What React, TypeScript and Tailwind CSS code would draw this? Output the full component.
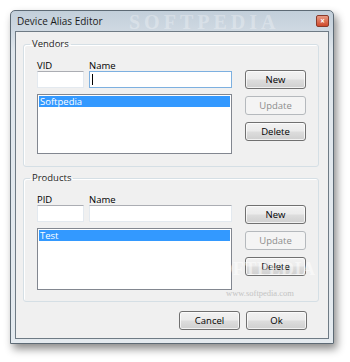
import { ReactNode } from "react";

const font = { fontFamily: '"Open Sans", "Noto Sans", sans-serif' };

function Btn({ children, disabled }: { children: ReactNode; disabled?: boolean }) {
  return (
    <button
      className={
        disabled
          ? "w-[61px] h-[19px] rounded-[3px] border border-[#b5b9bd] bg-[#f4f4f4] text-[9.5px] leading-none text-[#8d8d8d]"
          : "w-[61px] h-[19px] rounded-[3px] border border-[#707070] bg-[linear-gradient(to_bottom,#f2f2f2_0%,#ebebeb_48%,#dddddd_52%,#cfcfcf_100%)] shadow-[inset_0_0_0_1px_rgba(255,255,255,0.7)] text-[9.5px] leading-none text-black"
      }
    >
      {children}
    </button>
  );
}

function Group({
  title,
  idLabel,
  item,
  focused,
  listH,
  top,
  btnTop,
  pb,
}: {
  title: string;
  idLabel: string;
  item: string;
  focused?: boolean;
  listH: string;
  top: string;
  btnTop: string;
  pb: string;
}) {
  return (
    <fieldset
      className={`w-[296px] ml-[7px] border border-[#d5dfe5] rounded-[3px] shadow-[inset_1px_1px_0_#ffffff] pl-[13px] pt-[10px] ${top} ${pb}`}
    >
      <legend className="-ml-[7px] px-[2px] text-[9.5px] leading-[12px] text-[#1f1f1f]">{title}</legend>
      <div className="flex gap-[13px]">
        <div className="w-[195px] flex flex-col">
          <div className="flex h-[11px] text-[9.5px] leading-[11px] text-black">
            <span className="w-[52px]">{idLabel}</span>
            <span>Name</span>
          </div>
          <div className="flex gap-[5px] h-[17px]">
            <div className="w-[47px] h-full bg-white border border-[#e3e9ef] border-t-[#abadb3]" />
            <div
              className={
                focused
                  ? "flex-1 h-full bg-white border border-[#7db0e0] flex items-center pl-[2px]"
                  : "flex-1 h-full bg-white border border-[#e3e9ef] border-t-[#abadb3]"
              }
            >
              {focused && <div className="w-px h-[11px] bg-black" />}
            </div>
          </div>
          <div className={`mt-[6px] ${listH} bg-white border border-[#828790] p-px`}>
            <div className="h-[11px] bg-[#3399ff] text-white text-[9.5px] leading-[11px] pl-[1px]">{item}</div>
          </div>
        </div>
        <div className={`flex flex-col gap-[7px] ${btnTop}`}>
          <Btn>New</Btn>
          <Btn disabled>Update</Btn>
          <Btn>Delete</Btn>
        </div>
      </div>
    </fieldset>
  );
}

export default function App() {
  return (
    <div className="w-[350px] h-[362px] bg-white overflow-hidden pt-[10px] pl-[10px]" style={font}>
      <div className="relative w-[324px] h-[334px] border border-[#5d6a75] rounded-t-[5px] bg-[linear-gradient(to_bottom,#c2cfda_0px,#cfd9e2_20px,#dfe6ec_40px,#e4eaef_100%)] shadow-[3px_5px_9px_rgba(0,0,0,0.45)] flex flex-col">
        <div className="h-[20px] flex items-center pl-[6px] text-[10px] text-[#1b1b1b]">Device Alias Editor</div>
        <div className="absolute left-[118px] top-[1px] text-[20px] font-bold tracking-[4px] text-white/30 leading-[20px]" style={{ fontFamily: '"Liberation Serif", serif' }}>
          SOFTPEDIA
        </div>
        <div className="absolute right-[4px] top-[4px] w-[13px] h-[12px] rounded-[2px] border border-[#8a3a2a] bg-[linear-gradient(to_bottom,#e89a83,#d0492b)] flex items-center justify-center text-[8px] leading-none text-white font-bold">
          ×
        </div>
        <div className="flex-1 mx-[4px] mb-[4px] border border-[#6f7b85] bg-[#f0f0f0] flex flex-col relative">
          <Group title="Vendors" idLabel="VID" item="Softpedia" focused listH="h-[60px]" top="mt-[6px]" btnTop="mt-[10px]" pb="pb-[12px]" />
          <Group title="Products" idLabel="PID" item="Test" listH="h-[62px]" top="mt-[5px]" btnTop="mt-[11px]" pb="pb-[11px]" />
          <div className="flex justify-end gap-[6px] pr-[21px] mt-[9px]">
            <Btn>Cancel</Btn>
            <Btn>Ok</Btn>
          </div>
          <div className="absolute left-[192px] top-[227px] text-[18px] font-bold tracking-[0.5px] text-white/50 leading-[20px] pointer-events-none" style={{ fontFamily: '"Liberation Serif", serif' }}>
            SOFTPEDIA
          </div>
          <div className="absolute left-[210px] top-[257px] text-[8.5px] leading-[9px] text-[#c4c4c4]" style={{ fontFamily: '"Liberation Serif", serif' }}>
            www.softpedia.com
          </div>
        </div>
      </div>
    </div>
  );
}
